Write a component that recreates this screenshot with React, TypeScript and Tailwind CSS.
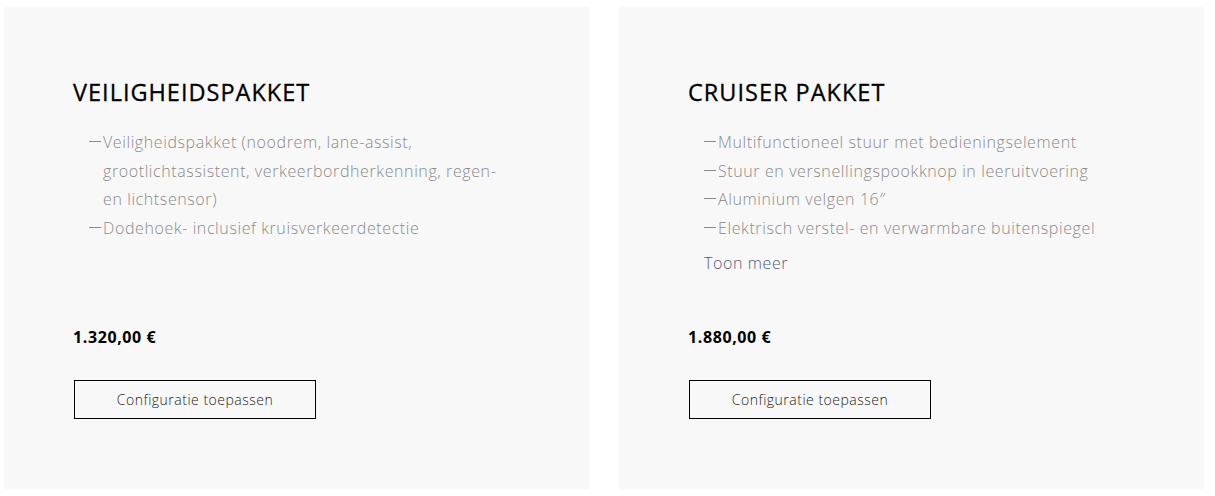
const packages = [
  {
    title: "VEILIGHEIDSPAKKET",
    items: [
      ["Veiligheidspakket (noodrem, lane-assist,", "grootlichtassistent, verkeerbordherkenning, regen-", "en lichtsensor)"],
      ["Dodehoek- inclusief kruisverkeerdetectie"],
    ],
    more: false,
    price: "1.320,00 €",
  },
  {
    title: "CRUISER PAKKET",
    items: [
      ["Multifunctioneel stuur met bedieningselement"],
      ["Stuur en versnellingspookknop in leeruitvoering"],
      ["Aluminium velgen 16\u2033"],
      ["Elektrisch verstel- en verwarmbare buitenspiegel"],
    ],
    more: true,
    price: "1.880,00 €",
  },
];

export default function App() {
  return (
    <div
      className="w-[1215px] h-[496px] bg-white pt-[7px] pl-[4px]"
      style={{ fontFamily: "'Open Sans', Lato, sans-serif" }}
    >
      <div className="flex gap-[30px]">
        {packages.map((p) => (
          <div
            key={p.title}
            className="w-[585px] h-[482px] bg-[#f8f8f8] flex flex-col pt-[71px] pb-[70px] pl-[69px] pr-[30px]"
          >
            <h2 className="text-[23.5px] leading-[28px] font-normal text-black tracking-[1px] [-webkit-text-stroke:0.3px_black]">
              {p.title}
            </h2>
            <ul className="mt-[22px] pl-[16px] flex-1">
              {p.items.map((lines, i) => (
                <li key={i} className="relative pl-[14px] text-[16px] leading-[28.5px] text-[#8a8a8a] font-light tracking-[0.6px]">
                  <span className="absolute left-0 top-[13px] w-[12px] h-px bg-[#8a8a8a]" />
                  {lines.map((l, j) => (
                    <span key={j} className="block whitespace-nowrap">{l}</span>
                  ))}
                </li>
              ))}
              {p.more && (
                <li className="mt-[7px] text-[16px] leading-[28px] text-[#4d5d7b] font-light tracking-[0.6px]">
                  Toon meer
                </li>
              )}
            </ul>
            <div className="text-[16px] leading-[20px] font-bold text-black tracking-[0.6px]">{p.price}</div>
            <button className="mt-[33px] ml-px w-[242px] h-[39px] border border-black text-[14px] font-light text-[#222] tracking-[0.5px]">
              Configuratie toepassen
            </button>
          </div>
        ))}
      </div>
    </div>
  );
}
